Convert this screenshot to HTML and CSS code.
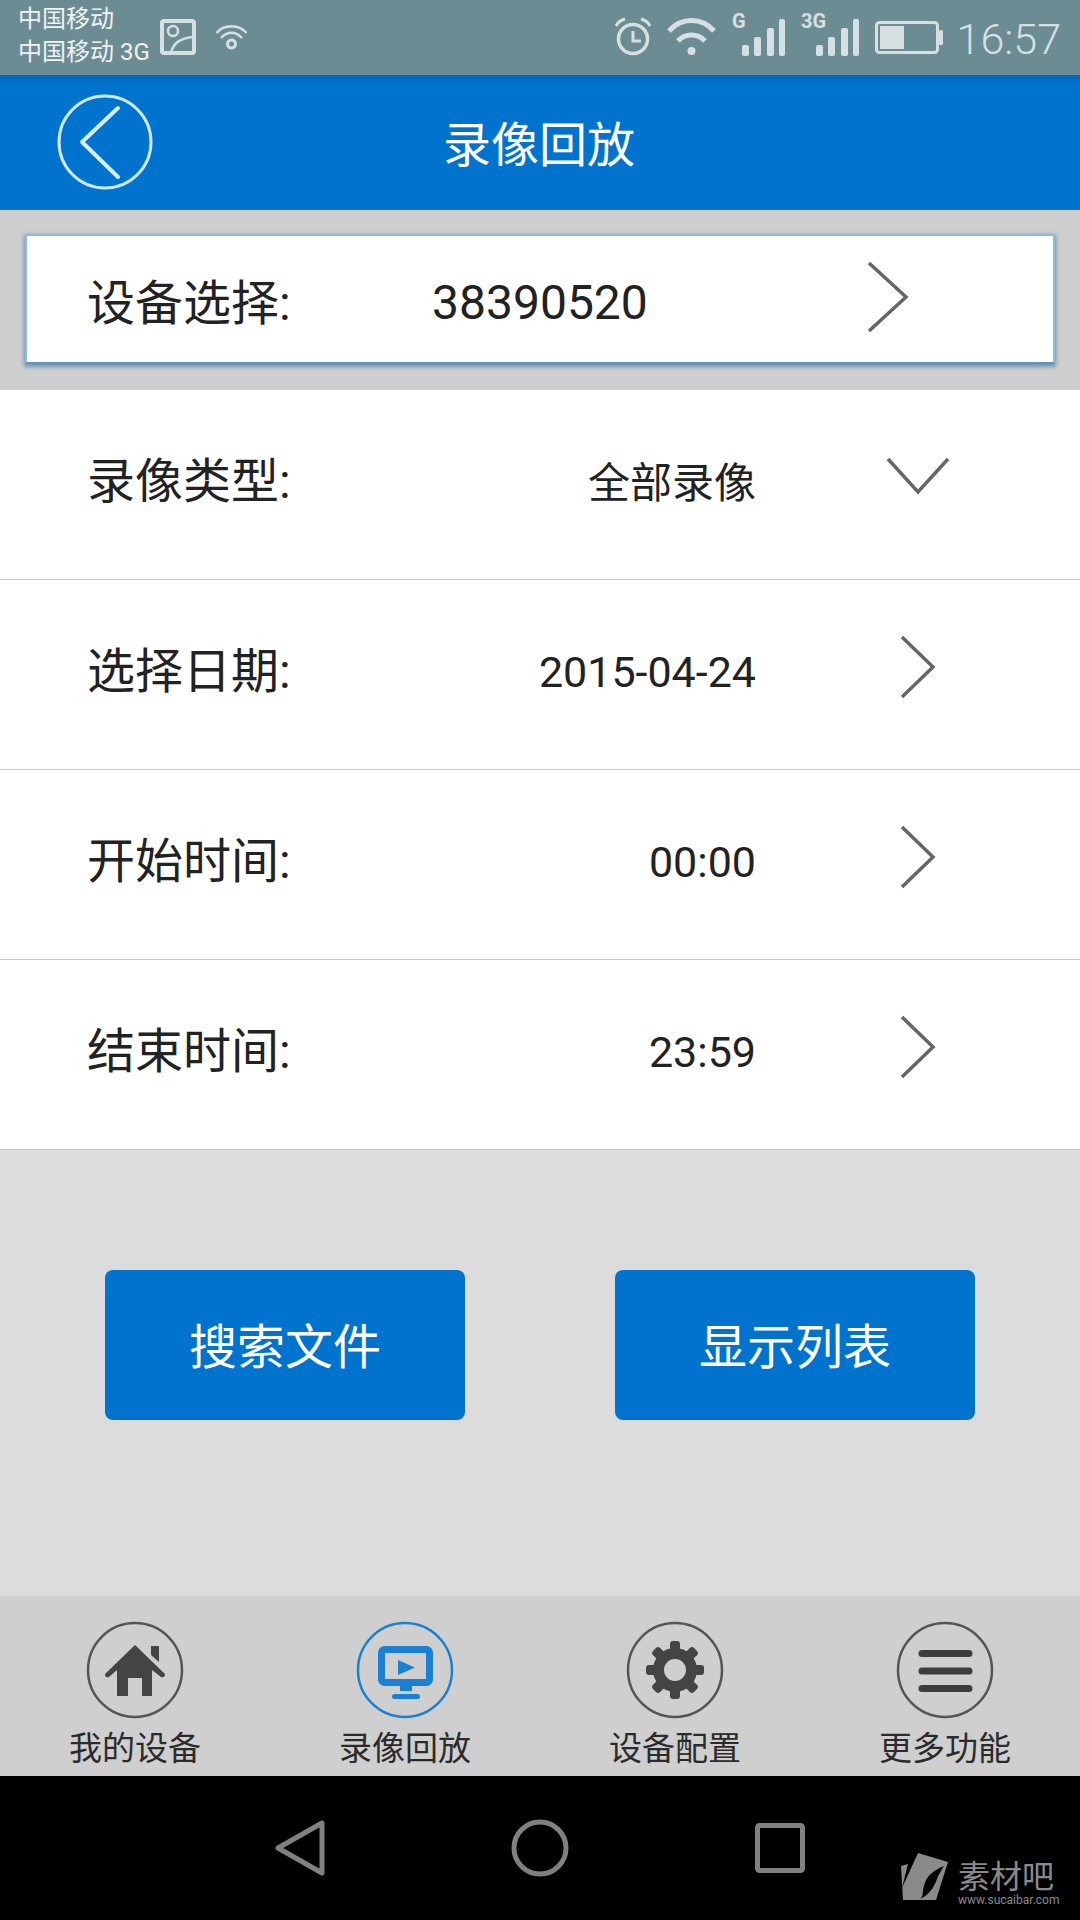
FILE: index.html
```html
<!DOCTYPE html>
<html lang="zh-CN">
<head>
  <meta charset="UTF-8" />
  <meta name="viewport" content="width=device-width, initial-scale=1.0" />
  <title>录像回放</title>
  <link rel="stylesheet" href="styles.css">
</head>
<body>
  <div class="status-bar">
    <div class="status-left">
      <div class="carriers">
        <div>中国移动</div>
        <div>中国移动 3G</div>
      </div>
      <svg class="st-image" width="36" height="75" viewBox="0 0 36 75">
        <rect x="2" y="21" width="32" height="32" rx="2" fill="none" stroke="#d6e0e2" stroke-width="4"/>
        <circle cx="13" cy="31" r="5" fill="none" stroke="#d6e0e2" stroke-width="2.5"/>
        <path d="M11 53 C13 43 21 38 33 37" fill="none" stroke="#d6e0e2" stroke-width="2.5"/>
      </svg>
      <svg class="st-hotspot" width="33" height="75" viewBox="0 0 33 75">
        <path d="M1.5 33 C9 24 24 24 31.5 33" fill="none" stroke="#d6e0e2" stroke-width="2.5"/>
        <path d="M6 38 C12 31 21 31 27 38" fill="none" stroke="#d6e0e2" stroke-width="2.5"/>
        <circle cx="16.5" cy="44" r="4" fill="none" stroke="#d6e0e2" stroke-width="3"/>
      </svg>
    </div>
    <div class="status-right">
      <svg width="36" height="75" viewBox="0 0 36 75">
        <circle cx="18" cy="39" r="14.5" fill="none" stroke="#d6e0e2" stroke-width="3.5"/>
        <path d="M18 31 V41 H26" fill="none" stroke="#d6e0e2" stroke-width="3"/>
        <path d="M1 26 C3 22 6 20 10 19 M35 26 C33 22 30 20 26 19" fill="none" stroke="#d6e0e2" stroke-width="3"/>
      </svg>
      <svg width="49" height="75" viewBox="0 0 49 75">
        <path d="M2 31 C14 17 35 17 47 31" fill="none" stroke="#d6e0e2" stroke-width="5"/>
        <path d="M11 41 C18 33 31 33 38 41" fill="none" stroke="#d6e0e2" stroke-width="5"/>
        <circle cx="24.5" cy="51" r="4" fill="#d6e0e2"/>
      </svg>
      <svg width="53" height="75" viewBox="0 0 53 75">
        <text x="0" y="28" class="net-label">G</text>
        <rect x="10" y="45" width="7" height="11" rx="2" fill="#d6e0e2"/>
        <rect x="22" y="37" width="7" height="19" rx="2" fill="#d6e0e2"/>
        <rect x="35" y="28" width="7" height="28" rx="2" fill="#d6e0e2"/>
        <rect x="47" y="19" width="6" height="37" rx="2" fill="#d6e0e2"/>
      </svg>
      <svg width="58" height="75" viewBox="0 0 58 75">
        <text x="0" y="28" class="net-label">3G</text>
        <rect x="15" y="45" width="7" height="11" rx="2" fill="#d6e0e2"/>
        <rect x="27" y="37" width="7" height="19" rx="2" fill="#d6e0e2"/>
        <rect x="40" y="28" width="7" height="28" rx="2" fill="#d6e0e2"/>
        <rect x="52" y="19" width="6" height="37" rx="2" fill="#d6e0e2"/>
      </svg>
      <svg class="st-battery" width="68" height="75" viewBox="0 0 68 75">
        <rect x="1.5" y="22.5" width="61" height="30" rx="3" fill="none" stroke="#d6e0e2" stroke-width="3"/>
        <rect x="5" y="26" width="24" height="23" fill="#d6e0e2"/>
        <rect x="64" y="30" width="4" height="15" rx="1.5" fill="#d6e0e2"/>
      </svg>
      <span class="clock">16:57</span>
    </div>
  </div>

  <header class="title-bar">
    <svg class="back-btn" width="98" height="98" viewBox="0 0 98 98">
      <circle cx="49" cy="49" r="46" fill="none" stroke="#cfe9fb" stroke-width="3"/>
      <path d="M62 15 L26 49 L62 84" fill="none" stroke="#d8eefc" stroke-width="4" stroke-linecap="round" stroke-linejoin="round"/>
    </svg>
    <h1>录像回放</h1>
  </header>

  <section class="device-wrap">
    <div class="device-card">
      <span class="label">设备选择:</span>
      <span class="device-value">38390520</span>
      <svg class="arrow-big" width="42" height="72" viewBox="0 0 42 72">
        <path d="M2 2 L39 36 L2 70" fill="none" stroke="#666" stroke-width="3.5"/>
      </svg>
    </div>
  </section>

  <section class="form-list">
    <div class="form-row">
      <span class="label">录像类型:</span>
      <span class="value value-cjk">全部录像</span>
      <svg class="arrow-down" width="64" height="38" viewBox="0 0 64 38">
        <path d="M2 2 L32 35 L62 2" fill="none" stroke="#666" stroke-width="3.5"/>
      </svg>
    </div>
    <div class="form-row">
      <span class="label">选择日期:</span>
      <span class="value">2015-04-24</span>
      <svg class="arrow-right" width="36" height="64" viewBox="0 0 36 64">
        <path d="M2 2 L33 32 L2 62" fill="none" stroke="#666" stroke-width="3.5"/>
      </svg>
    </div>
    <div class="form-row">
      <span class="label">开始时间:</span>
      <span class="value">00:00</span>
      <svg class="arrow-right" width="36" height="64" viewBox="0 0 36 64">
        <path d="M2 2 L33 32 L2 62" fill="none" stroke="#666" stroke-width="3.5"/>
      </svg>
    </div>
    <div class="form-row">
      <span class="label">结束时间:</span>
      <span class="value">23:59</span>
      <svg class="arrow-right" width="36" height="64" viewBox="0 0 36 64">
        <path d="M2 2 L33 32 L2 62" fill="none" stroke="#666" stroke-width="3.5"/>
      </svg>
    </div>
  </section>

  <section class="actions">
    <button class="action-btn">搜索文件</button>
    <button class="action-btn">显示列表</button>
  </section>

  <nav class="tab-bar">
    <div class="tab">
      <svg width="98" height="98" viewBox="0 0 98 98">
        <circle cx="49" cy="49" r="47" fill="none" stroke="#555" stroke-width="2.5"/>
        <path d="M65 25 H73 V41 L65 34 Z" fill="#444"/>
        <path d="M49 24 L79 53 Q79 57 75 56 L66 49 V75 H56 V57 H42 V75 H31 V49 L23 56 Q19 57 19 53 Z" fill="#444"/>
      </svg>
      <span>我的设备</span>
    </div>
    <div class="tab tab-active">
      <svg width="98" height="98" viewBox="0 0 98 98">
        <circle cx="49" cy="49" r="47" fill="none" stroke="#1a80d4" stroke-width="2.5"/>
        <rect x="25.5" y="28.5" width="48" height="33" rx="3" fill="none" stroke="#1a80d4" stroke-width="7"/>
        <path d="M42 39 L59 46.5 L42 54 Z" fill="#1a80d4"/>
        <rect x="44" y="64" width="12" height="6" fill="#1a80d4"/>
        <rect x="36" y="73" width="28" height="5" rx="2.5" fill="#1a80d4"/>
      </svg>
      <span>录像回放</span>
    </div>
    <div class="tab">
      <svg width="98" height="98" viewBox="0 0 98 98">
        <circle cx="49" cy="49" r="47" fill="none" stroke="#555" stroke-width="2.5"/>
        <circle cx="49" cy="49" r="16.5" fill="none" stroke="#444" stroke-width="11"/>
        <g fill="#444">
          <rect x="44" y="20" width="10" height="12" rx="3"/>
          <rect x="44" y="66" width="10" height="12" rx="3"/>
          <rect x="20" y="44" width="12" height="10" rx="3"/>
          <rect x="66" y="44" width="12" height="10" rx="3"/>
          <rect x="44" y="20" width="10" height="12" rx="3" transform="rotate(45 49 49)"/>
          <rect x="44" y="66" width="10" height="12" rx="3" transform="rotate(45 49 49)"/>
          <rect x="20" y="44" width="12" height="10" rx="3" transform="rotate(45 49 49)"/>
          <rect x="66" y="44" width="12" height="10" rx="3" transform="rotate(45 49 49)"/>
        </g>
      </svg>
      <span>设备配置</span>
    </div>
    <div class="tab">
      <svg width="98" height="98" viewBox="0 0 98 98">
        <circle cx="49" cy="49" r="47" fill="none" stroke="#555" stroke-width="2.5"/>
        <path d="M26 32.5 H73 M26 50 H73 M26 67.5 H73" fill="none" stroke="#3d3d3d" stroke-width="7" stroke-linecap="round"/>
      </svg>
      <span>更多功能</span>
    </div>
  </nav>

  <div class="nav-bar">
    <svg width="60" height="60" viewBox="0 0 60 60">
      <path d="M52 5 V55 L8 30 Z" fill="none" stroke="#808080" stroke-width="5" stroke-linejoin="round"/>
    </svg>
    <svg width="60" height="60" viewBox="0 0 60 60">
      <circle cx="30" cy="30" r="26" fill="none" stroke="#808080" stroke-width="5"/>
    </svg>
    <svg width="60" height="60" viewBox="0 0 60 60">
      <rect x="7.5" y="7.5" width="45" height="45" rx="2" fill="none" stroke="#808080" stroke-width="5"/>
    </svg>
    <div class="watermark">
      <svg width="52" height="50" viewBox="0 0 52 50">
        <path d="M18 1 L48 10 L36 48 L3 48 L1 14 L8 12 L2 36 Z" fill="#8a8a8a"/>
        <path d="M44 14 C34 18 26 24 24 34 C22 40 24 44 20 47 C32 42 36 30 38 24 Z" fill="#000"/>
      </svg>
      <div class="wm-text">
        <div class="wm-name">素材吧</div>
        <div class="wm-url">www.sucaibar.com</div>
      </div>
    </div>
  </div>
</body>
</html>
```

FILE: styles.css
```css
* {
  box-sizing: border-box;
}

body {
  margin: 0;
  width: 1080px;
  height: 1920px;
  overflow: hidden;
  font-family: Roboto, "Noto Sans CJK SC", sans-serif;
  background: #dcdcdc;
  color: #222;
}

svg {
  display: block;
  flex: none;
}

/* status bar */
.status-bar {
  height: 75px;
  background: #6c8c94;
  display: flex;
  justify-content: space-between;
  padding: 0 19px 0 18px;
}

.status-left,
.status-right {
  display: flex;
}

.carriers {
  width: 142px;
  padding-top: 3px;
  font-size: 24px;
  line-height: 33px;
  color: #eef3f4;
  white-space: nowrap;
}

.st-hotspot {
  margin-left: 19px;
}

.status-right svg {
  margin-right: 16px;
}

.status-right .st-battery {
  margin-right: 14px;
}

.net-label {
  font-family: Roboto, sans-serif;
  font-size: 20px;
  font-weight: 700;
  fill: #d6e0e2;
}

.clock {
  font-size: 43px;
  font-weight: 300;
  line-height: 78px;
  color: #d6e0e2;
}

/* title */
.title-bar {
  height: 135px;
  background: linear-gradient(#0067b8, #0073cf 10px);
  position: relative;
  display: flex;
  align-items: center;
  justify-content: center;
}

.title-bar h1 {
  margin: -3px 2px 0 0;
  font-size: 48px;
  font-weight: 400;
  color: #fff;
}

.back-btn {
  position: absolute;
  left: 56px;
  top: 18px;
}

/* device */
.device-wrap {
  height: 180px;
  background: #cfcfcf;
  padding: 24px 25px 26px 25px;
}

.device-card {
  height: 130px;
  background: #fff;
  border: 2px solid #8dbbdd;
  border-bottom-color: #5f94bd;
  box-shadow: 0 2px 4px 1px rgba(70, 120, 160, 0.7);
  display: flex;
  align-items: center;
  padding-left: 60px;
}

.label {
  font-size: 48px;
  line-height: 60px;
  color: #222;
}

.device-card .label {
  width: 345px;
  margin-top: 9px;
}

.device-value {
  width: 435px;
  font-size: 48px;
  margin-top: 7px;
}

.arrow-big {
  margin-top: -4px;
}

/* rows */
.form-list {
  background: #fff;
}

.form-row {
  height: 190px;
  border-bottom: 1px solid #c8c8c8;
  display: flex;
  align-items: center;
  padding-left: 87px;
}

.form-row .label {
  flex: 1;
  margin-top: -5px;
}

.value {
  font-size: 43px;
  margin-top: -5px;
}

.value-cjk {
  font-size: 42px;
  margin-top: -11px;
}

.arrow-right {
  margin-left: 144px;
  margin-right: 144px;
  margin-top: -15px;
}

.arrow-down {
  margin-left: 130px;
  margin-right: 130px;
  margin-top: -17px;
}

/* buttons */
.actions {
  height: 446px;
  padding: 120px 105px 0;
  display: flex;
  justify-content: space-between;
  align-items: flex-start;
}

.action-btn {
  width: 360px;
  height: 150px;
  padding: 0 0 5px;
  border: none;
  border-radius: 8px;
  background: #0073cf;
  color: #fff;
  font-family: inherit;
  font-size: 48px;
}

/* tabs */
.tab-bar {
  height: 180px;
  background: #cfcfcf;
  display: flex;
}

.tab {
  width: 270px;
  padding-top: 25px;
  display: flex;
  flex-direction: column;
  align-items: center;
  font-size: 33px;
  line-height: 42px;
  color: #2b2b2b;
}

.tab span {
  margin-top: 9px;
}

/* android nav */
.nav-bar {
  height: 144px;
  background: #000;
  position: relative;
  display: flex;
  justify-content: center;
  align-items: center;
  gap: 180px;
}

.watermark {
  position: absolute;
  left: 900px;
  top: 76px;
  display: flex;
  gap: 6px;
  color: #8a8a8a;
}

.wm-name {
  font-size: 32px;
  line-height: 32px;
  margin-top: 9px;
}

.wm-url {
  font-size: 12px;
  line-height: 14px;
  white-space: nowrap;
}
```
